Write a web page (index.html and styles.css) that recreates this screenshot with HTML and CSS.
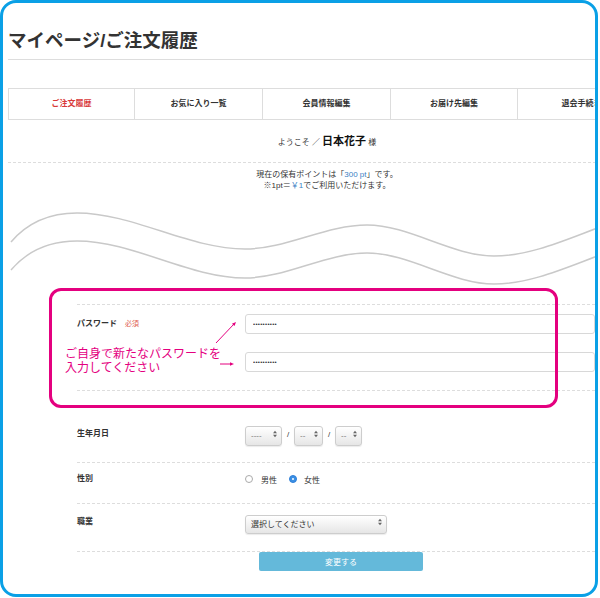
FILE: index.html
```html
<!DOCTYPE html>
<html lang="ja">
<head>
    <meta charset="UTF-8">
    <meta name="viewport" content="width=device-width, initial-scale=1.0">
    <title>マイページ/ご注文履歴</title>
    <link rel="stylesheet" href="styles.css">
</head>
<body>

<div class="frame">
    <div class="page">

        <h1 class="page-title">マイページ/ご注文履歴</h1>

        <!-- My page menu -->
        <ul class="tabs">
            <li class="active">ご注文履歴</li>
            <li>お気に入り一覧</li>
            <li>会員情報編集</li>
            <li>お届け先編集</li>
            <li>退会手続き</li>
        </ul>

        <p class="welcome">ようこそ ／ <strong>日本花子</strong> 様</p>
        <p class="points">現在の保有ポイントは「<span class="blue">300 pt</span>」です。<br>※1pt＝<span class="blue">￥1</span>でご利用いただけます。</p>

        <svg class="waves" width="600" height="105" viewBox="0 0 600 105">
            <path d="M11,47 C28,27 52,18 77,18 C133,18 189,54 245,54 C286,54 326,30 367,30 C409,30 452,61 494,61 C530,61 565,45 600,32" />
            <path d="M11,75 C28,55 52,46 77,46 C133,46 189,83 245,83 C286,83 326,58 367,58 C409,58 452,89 494,89 C530,89 565,73 600,60" />
        </svg>

        <!-- Member info form -->
        <form class="member-form">
            <div class="row row-pass">
                <div class="row-label">パスワード<span class="req">必須</span></div>
                <div class="row-field stack">
                    <input class="text" type="password" value="password12" readonly>
                    <input class="text" type="password" value="password12" readonly>
                </div>
            </div>

            <div class="row row-birth">
                <div class="row-label">生年月日</div>
                <div class="row-field inline">
                    <span class="sel sel-year">
                        <select><option>----</option></select>
                        <svg viewBox="0 0 5 8"><path d="M2.5 0 L5 3 L0 3 Z M2.5 8 L5 5 L0 5 Z" /></svg>
                    </span>
                    <span class="slash">/</span>
                    <span class="sel sel-md">
                        <select><option>--</option></select>
                        <svg viewBox="0 0 5 8"><path d="M2.5 0 L5 3 L0 3 Z M2.5 8 L5 5 L0 5 Z" /></svg>
                    </span>
                    <span class="slash">/</span>
                    <span class="sel sel-day">
                        <select><option>--</option></select>
                        <svg viewBox="0 0 5 8"><path d="M2.5 0 L5 3 L0 3 Z M2.5 8 L5 5 L0 5 Z" /></svg>
                    </span>
                </div>
            </div>

            <div class="row row-sex">
                <div class="row-label">性別</div>
                <div class="row-field inline">
                    <label class="radio"><input type="radio" name="sex">男性</label>
                    <label class="radio"><input type="radio" name="sex" checked>女性</label>
                </div>
            </div>

            <div class="row row-job">
                <div class="row-label">職業</div>
                <div class="row-field inline">
                    <span class="sel sel-job">
                        <select><option>選択してください</option></select>
                        <svg viewBox="0 0 5 8"><path d="M2.5 0 L5 3 L0 3 Z M2.5 8 L5 5 L0 5 Z" /></svg>
                    </span>
                </div>
            </div>

            <button type="button" class="submit">変更する</button>
        </form>
    </div>

    <!-- Annotation over the password row -->
    <div class="note-box"></div>
    <p class="note-text">ご自身で新たなパスワードを<br>入力してください</p>
    <svg class="note-arrows" width="30" height="52" viewBox="0 0 30 52">
        <line x1="6" y1="25" x2="24" y2="6" />
        <polygon points="26,4 24.5,8.1 21.9,5.7" />
        <line x1="10" y1="46" x2="21" y2="46" />
        <polygon points="24,46 20,44.3 20,47.7" />
    </svg>
</div>

</body>
</html>
```

FILE: styles.css
```css
/* General */
* {
    box-sizing: border-box;
}
body {
    margin: 0;
    width: 600px;
    height: 598px;
    overflow: hidden;
    background: #fff;
    color: #333;
    font-family: "Liberation Sans", "Noto Sans CJK JP", sans-serif;
}
p, ul, h1 {
    margin: 0;
    padding: 0;
}

/* Blue rounded frame, clips the page */
.frame {
    position: relative;
    width: 598px;
    height: 597px;
    border: 3px solid #0aa0e6;
    border-radius: 16px;
    overflow: hidden;
}
.page {
    width: 638px;
    margin-left: 5px;
    padding-top: 26px;
}

/* Title */
.page-title {
    height: 31px;
    font-size: 18.5px;
    line-height: 24px;
    font-weight: bold;
    color: #333;
    padding-bottom: 6px;
    border-bottom: 1px solid #ddd;
}

/* Tabs */
.tabs {
    list-style: none;
    margin-top: 28px;
    display: grid;
    grid-template-columns: 126px 128px 128px 127px 128px;
    height: 32px;
    border: 1px solid #ddd;
    border-right: none;
}
.tabs li {
    border-right: 1px solid #ddd;
    text-align: center;
    font-size: 8px;
    font-weight: bold;
    line-height: 30px;
    color: #333;
}
.tabs li.active {
    color: #d8393a;
}

/* Welcome / points */
.welcome {
    height: 43px;
    text-align: center;
    font-size: 8px;
    line-height: 16px;
    padding: 13px 0;
    border-bottom: 1px dashed #ddd;
}
.welcome strong {
    font-size: 11px;
    color: #111;
}
.points {
    height: 28px;
    text-align: center;
    font-size: 8px;
    line-height: 11px;
    padding-top: 6px;
}
.blue {
    color: #3d7fc4;
}

.waves {
    display: block;
    margin: 4px 0 0 -8px;
}
.waves path {
    fill: none;
    stroke: #c9c9c9;
    stroke-width: 1.5;
}

/* Form */
.member-form {
    width: 528px;
    margin: 4px 0 0 69px;
}
.row {
    display: flex;
    border-top: 1px dashed #ddd;
}
.row-label {
    width: 168px;
    flex: none;
    font-size: 8px;
    font-weight: bold;
    line-height: 20px;
}
.row-field {
    flex: 1;
    padding-right: 10px;
}
.stack {
    display: flex;
    flex-direction: column;
    gap: 18px;
}
.inline {
    display: flex;
    align-items: center;
    height: 20px;
}
.req {
    margin-left: 8px;
    font-size: 7px;
    font-weight: normal;
    color: #e0604f;
}

.row-pass {
    height: 86px;
    padding: 9px 0 18px;
}
.row-birth {
    height: 72px;
    padding: 33px 0 18px;
}
.row-sex {
    height: 41px;
    padding: 6px 0 14px;
}
.row-job {
    height: 49px;
    padding: 8px 0 19px;
    border-bottom: 1px dashed #ddd;
}

.text {
    display: block;
    width: 350px;
    height: 20px;
    margin: 0;
    border: 1px solid #d8d8d8;
    border-radius: 3px;
    padding: 0 7px;
    font-size: 6px;
    letter-spacing: 0.3px;
    color: #333;
    outline: none;
}

/* Selects */
.sel {
    position: relative;
    display: inline-block;
    height: 20px;
}
.sel select {
    appearance: none;
    -webkit-appearance: none;
    width: 100%;
    height: 100%;
    margin: 0;
    border: 1px solid #cdcdcd;
    border-radius: 3px;
    background: linear-gradient(#ffffff, #e6e6e6);
    box-shadow: 0 1px 1px rgba(0, 0, 0, 0.08);
    padding: 0 5px;
    font-family: inherit;
    font-size: 8px;
    color: #777;
}
.sel svg {
    position: absolute;
    right: 5px;
    top: 6px;
    width: 4px;
    height: 8px;
    fill: #666;
}
.sel-year {
    width: 37px;
}
.sel-md {
    width: 29px;
}
.sel-day {
    width: 27px;
}
.slash {
    width: 12px;
    text-align: center;
    font-size: 8px;
}
.sel-job {
    width: 142px;
    height: 19px;
}
.sel-job svg {
    top: 5px;
}
.sel-job select {
    color: #333;
}

/* Radios */
.radio {
    display: flex;
    align-items: center;
    font-size: 8px;
    margin-right: 12px;
}
.radio input {
    appearance: none;
    -webkit-appearance: none;
    width: 8px;
    height: 8px;
    margin: 0 8px 0 0;
    border: 1px solid #aaa;
    border-radius: 50%;
    background: #fff;
    position: relative;
}
.radio input:checked {
    background: #3b8fe4;
    border-color: #3080d8;
}
.radio input:checked::after {
    content: "";
    position: absolute;
    left: 2px;
    top: 2px;
    width: 2px;
    height: 2px;
    border-radius: 50%;
    background: #fff;
}
.radio + .radio input {
    margin-right: 7px;
}

.submit {
    display: block;
    width: 164px;
    height: 19px;
    margin: 0 auto;
    border: none;
    border-radius: 2px;
    background: #64b9da;
    color: #fff;
    font-family: inherit;
    font-size: 8px;
}

/* Pink annotation */
.note-box {
    position: absolute;
    left: 46px;
    top: 285px;
    width: 509px;
    height: 120px;
    border: 3px solid #e4007f;
    border-radius: 12px;
}
.note-text {
    position: absolute;
    left: 62px;
    top: 344px;
    font-size: 12px;
    line-height: 14px;
    color: #e4007f;
}
.note-arrows {
    position: absolute;
    left: 207px;
    top: 315px;
}
.note-arrows line {
    stroke: #e4007f;
    stroke-width: 1;
}
.note-arrows polygon {
    fill: #e4007f;
}
```
